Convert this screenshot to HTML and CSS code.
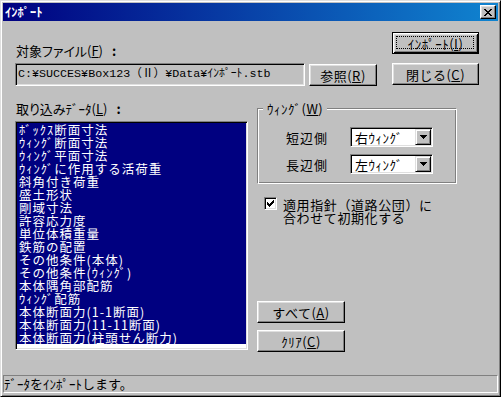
FILE: index.html
```html
<!DOCTYPE html>
<html lang="ja">
<head>
<meta charset="utf-8">
<title>ｲﾝﾎﾟｰﾄ</title>
<link rel="stylesheet" href="styles.css">
</head>
<body>
<div class="window">
  <div class="titlebar">
    <span class="title">ｲﾝﾎﾟｰﾄ</span>
    <span class="close"><svg width="8" height="7" viewBox="0 0 8 7" shape-rendering="crispEdges"><path fill="#000" d="M0 0h2v1h-2zM6 0h2v1h-2zM1 1h2v1h-2zM5 1h2v1h-2zM2 2h4v1h-4zM3 3h2v1h-2zM2 4h4v1h-4zM1 5h2v1h-2zM5 5h2v1h-2zM0 6h2v1h-2zM6 6h2v1h-2z"/></svg></span>
  </div>
  <div class="client">
    <div class="top">
      <div class="label file-label">対象ファイル(<u>F</u>)<span class="colon">:</span></div>
      <button class="btn btn-default import-btn"><span class="focus">ｲﾝﾎﾟｰﾄ(<u>I</u>)</span></button>
      <div class="textbox">C:¥SUCCES¥Box123（Ⅱ）¥Data¥ｲﾝﾎﾟｰﾄ.stb</div>
      <button class="btn ref-btn">参照(<u>R</u>)</button>
      <button class="btn close-btn">閉じる(<u>C</u>)</button>
    </div>
    <div class="bottom">
      <div class="leftcol">
        <div class="label">取り込みﾃﾞｰﾀ(<u>L</u>)<span class="colon">:</span></div>
        <div class="listbox">
          <div class="item">ﾎﾞｯｸｽ断面寸法</div>
          <div class="item">ｳｨﾝｸﾞ断面寸法</div>
          <div class="item">ｳｨﾝｸﾞ平面寸法</div>
          <div class="item">ｳｨﾝｸﾞに作用する活荷重</div>
          <div class="item">斜角付き荷重</div>
          <div class="item">盛土形状</div>
          <div class="item">剛域寸法</div>
          <div class="item">許容応力度</div>
          <div class="item">単位体積重量</div>
          <div class="item">鉄筋の配置</div>
          <div class="item">その他条件(本体)</div>
          <div class="item">その他条件(ｳｨﾝｸﾞ)</div>
          <div class="item">本体隅角部配筋</div>
          <div class="item">ｳｨﾝｸﾞ配筋</div>
          <div class="item">本体断面力(1-1断面)</div>
          <div class="item">本体断面力(11-11断面)</div>
          <div class="item">本体断面力(柱頭せん断力)</div>
        </div>
      </div>
      <div class="rightcol">
        <fieldset class="group">
          <legend class="legend">ｳｨﾝｸﾞ(<u>W</u>)</legend>
          <div class="combos">
            <div class="label combo-label">短辺側</div>
            <div class="combo"><span class="combo-text">右ｳｨﾝｸﾞ</span><span class="drop"><svg width="7" height="4" viewBox="0 0 7 4" shape-rendering="crispEdges"><path fill="#000" d="M0 0h7v1h-7zM1 1h5v1h-5zM2 2h3v1h-3zM3 3h1v1h-1z"/></svg></span></div>
            <div class="label combo-label">長辺側</div>
            <div class="combo"><span class="combo-text">左ｳｨﾝｸﾞ</span><span class="drop"><svg width="7" height="4" viewBox="0 0 7 4" shape-rendering="crispEdges"><path fill="#000" d="M0 0h7v1h-7zM1 1h5v1h-5zM2 2h3v1h-3zM3 3h1v1h-1z"/></svg></span></div>
          </div>
        </fieldset>
        <div class="check-row">
          <span class="checkbox"><svg width="7" height="7" viewBox="0 0 7 7" shape-rendering="crispEdges"><path fill="#000" d="M6 0h1v1h-1zM5 1h2v1h-2zM0 2h1v1h-1zM4 2h3v1h-3zM0 3h2v1h-2zM3 3h3v1h-3zM0 4h5v1h-5zM1 5h3v1h-3zM2 6h1v1h-1z"/></svg></span>
          <span class="check-text">適用指針（道路公団）に<br>合わせて初期化する</span>
        </div>
        <div class="sidebtns">
          <button class="btn side-btn">すべて(<u>A</u>)</button>
          <button class="btn side-btn">ｸﾘｱ(<u>C</u>)</button>
        </div>
      </div>
    </div>
  </div>
  <div class="status">ﾃﾞｰﾀをｲﾝﾎﾟｰﾄします。</div>
</div>
</body>
</html>
```

FILE: styles.css
```css
html, body {
  margin: 0;
  padding: 0;
  background: #c0c0c0;
}

.window {
  width: 501px;
  height: 397px;
  box-sizing: border-box;
  border: 1px solid;
  border-color: #dfdfdf #000 #000 #dfdfdf;
  box-shadow: inset 1px 1px #fff, inset -1px -1px #808080;
  padding: 2px;
  background: #c0c0c0;
  display: flex;
  flex-direction: column;
  font-family: "Noto Sans CJK JP", sans-serif;
  font-size: 13px;
  color: #000;
}

.titlebar {
  height: 18px;
  flex: none;
  display: flex;
  align-items: center;
  justify-content: space-between;
  background: linear-gradient(90deg, #000080, #1084d0);
  padding: 0 2px 0 2px;
}

.title {
  color: #fff;
  font-weight: bold;
  font-size: 12.5px;
  line-height: 14px;
}

.close {
  width: 16px;
  height: 14px;
  box-sizing: border-box;
  background: #c0c0c0;
  border: 1px solid;
  border-color: #fff #000 #000 #fff;
  box-shadow: inset -1px -1px #808080, inset 1px 1px #dfdfdf;
  display: flex;
  align-items: center;
  justify-content: center;
}

.close svg { display: block; }

.client {
  flex: 1;
  padding: 11px 0 0 12px;
}

.label {
  line-height: 13px;
  font-feature-settings: "palt";
  white-space: nowrap;
}

.colon {
  display: inline-block;
  margin-left: 9px;
  font-weight: bold;
}

u { text-decoration: underline; text-underline-offset: 1px; }

.top {
  display: grid;
  grid-template-columns: 290px 4px 68px 15px 87px;
  grid-template-rows: 25px 23px;
  row-gap: 6px;
}

.file-label {
  grid-column: 1;
  grid-row: 1;
  align-self: end;
  padding-left: 1px;
}

.btn {
  font-family: "Noto Sans CJK JP", sans-serif;
  font-size: 13px;
  letter-spacing: 0.5px;
  color: #000;
  height: 22px;
  box-sizing: border-box;
  background: #c0c0c0;
  border: 1px solid;
  border-color: #fff #000 #000 #fff;
  box-shadow: inset -1px -1px #808080, inset 1px 1px #dfdfdf;
  padding: 0;
  margin: 0;
  line-height: 13px;
  display: flex;
  align-items: center;
  justify-content: center;
  white-space: nowrap;
}

.btn-default {
  border: 1px solid #000;
  box-shadow: inset 1px 1px #fff, inset -1px -1px #000, inset 2px 2px #dfdfdf, inset -2px -2px #808080;
  position: relative;
}

.btn-default::after {
  content: "";
  position: absolute;
  left: 3px;
  top: 3px;
  right: 4px;
  bottom: 4px;
  border: 1px dotted #000;
}

.import-btn {
  grid-column: 5;
  grid-row: 1;
  align-self: start;
}

.textbox {
  grid-column: 1;
  grid-row: 2;
  height: 23px;
  box-sizing: border-box;
  border: 1px solid;
  border-color: #808080 #fff #fff #808080;
  box-shadow: inset 1px 1px #000, inset -1px -1px #dfdfdf;
  background: #c0c0c0;
  font-family: "Liberation Mono", "Noto Sans CJK JP", monospace;
  font-size: 11.7px;
  line-height: 21px;
  padding-left: 2px;
  white-space: nowrap;
  overflow: hidden;
}

.ref-btn {
  grid-column: 3;
  grid-row: 2;
  margin-top: 1px;
}

.close-btn {
  grid-column: 5;
  grid-row: 2;
}

.bottom {
  display: grid;
  grid-template-columns: 233px 200px;
  column-gap: 9px;
  margin-top: 16px;
  align-items: start;
}

.leftcol .label { padding-left: 1px; }

.listbox {
  margin-top: 6px;
  height: 229px;
  box-sizing: border-box;
  border: 1px solid;
  border-color: #808080 #fff #fff #808080;
  box-shadow: inset 1px 1px #000, inset -1px -1px #dfdfdf;
  padding: 1px;
  background: #fff;
  font-size: 12.5px;
  letter-spacing: 1px;
}

.item {
  background: #000080;
  color: #fff;
  height: 13px;
  line-height: 13px;
  padding-left: 2px;
  white-space: nowrap;
}

.group {
  margin: 0;
  width: 200px;
  box-sizing: border-box;
  border: 1px solid;
  border-color: #808080 #fff #fff #808080;
  box-shadow: inset 1px 1px #fff, inset -1px -1px #808080;
  padding: 12px 0 9px 28px;
  min-width: 0;
}

.legend {
  margin-left: -23px;
  padding: 0 4px 0 4px;
  background: #c0c0c0;
  line-height: 13px;
  letter-spacing: 0.5px;
}

.combos {
  display: grid;
  grid-template-columns: 64px 83px;
  grid-template-rows: 20px 20px;
  row-gap: 7px;
  align-items: center;
}

.combo-label {
  font-feature-settings: normal;
  letter-spacing: 1px;
}

.combo {
  height: 20px;
  box-sizing: border-box;
  border: 1px solid;
  border-color: #808080 #fff #fff #808080;
  box-shadow: inset 1px 1px #000, inset -1px -1px #dfdfdf;
  background: #fff;
  padding: 1px;
  display: flex;
  align-items: center;
}

.combo-text {
  flex: 1;
  padding-left: 3px;
  line-height: 13px;
  letter-spacing: 0.5px;
  white-space: nowrap;
}

.drop {
  width: 16px;
  height: 16px;
  box-sizing: border-box;
  background: #c0c0c0;
  border: 1px solid;
  border-color: #dfdfdf #000 #000 #dfdfdf;
  box-shadow: inset 1px 1px #fff, inset -1px -1px #808080;
  display: flex;
  align-items: center;
  justify-content: center;
}

.drop svg, .checkbox svg { display: block; }

.check-row {
  margin-top: 13px;
  margin-left: 7px;
  display: flex;
  align-items: flex-start;
}

.checkbox {
  width: 13px;
  height: 13px;
  box-sizing: border-box;
  border: 1px solid;
  border-color: #808080 #fff #fff #808080;
  box-shadow: inset 1px 1px #000, inset -1px -1px #dfdfdf;
  background: #fff;
  padding: 2px;
  flex: none;
}

.check-text {
  margin-left: 6px;
  margin-top: 1px;
  line-height: 13px;
  letter-spacing: 0.6px;
  white-space: nowrap;
}

.sidebtns {
  margin-top: 77px;
  display: flex;
  flex-direction: column;
  row-gap: 7px;
}

.side-btn { width: 88px; }

.status {
  height: 18px;
  flex: none;
  margin-bottom: 1px;
  box-sizing: border-box;
  border: 1px solid;
  border-color: #808080 #fff #fff #808080;
  line-height: 16px;
  padding-left: 0;
  white-space: nowrap;
}
```
